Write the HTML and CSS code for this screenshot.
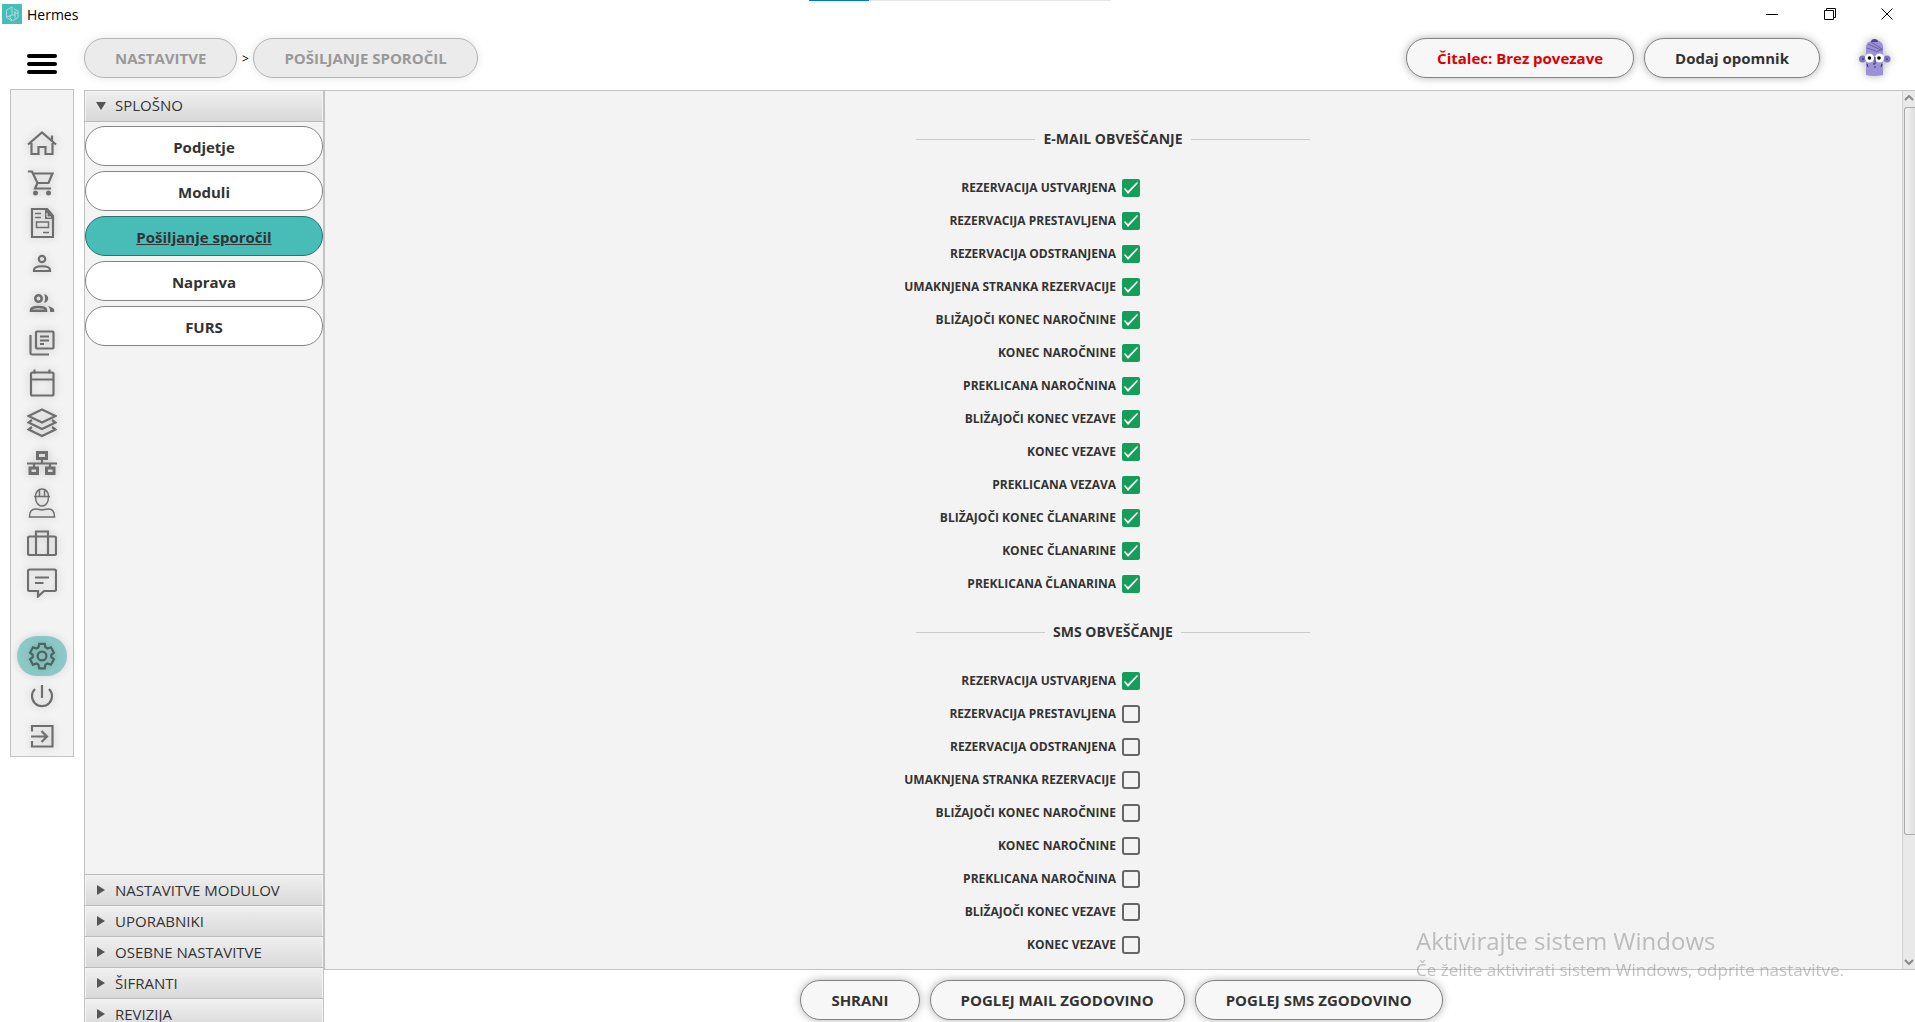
FILE: index.html
```
<!DOCTYPE html>
<html lang="sl">
<head>
    <meta charset="UTF-8">
    <meta name="viewport" content="width=device-width, initial-scale=1.0">
    <title>Hermes</title>
    <link rel="stylesheet" href="styles.css">
</head>
<body>
    <div class="loader"><span></span></div>
    <header class="titlebar">
        <svg class="logo" viewBox="0 0 20 20"><rect width="20" height="20" fill="#48bdb8"/><path d="M10 3 4.500 6v7.500L10 17l6-3.500V7l-4-2M10 3v8l-5 2M10 11h3V7M13 8v6M16 9h-2M8 11v3l2 2" fill="none" stroke="#a4dfdc"/></svg>
        <span class="app-name">Hermes</span>
        <div class="window-controls">
            <button aria-label="Minimiraj"><svg viewBox="0 0 12 12"><path d="M0 6.500h12"/></svg></button>
            <button aria-label="Obnovi"><svg viewBox="0 0 12 12"><path d="M.5 2.500h9v9h-9zM2.500 2.500v-2h9v9h-2"/></svg></button>
            <button aria-label="Zapri"><svg viewBox="0 0 12 12"><path d="M.5.5l11 11M11.500.5l-11 11"/></svg></button>
        </div>
    </header>
    <div class="app">
        <div class="left">
            <button class="burger" aria-label="Meni"><span></span><span></span><span></span></button>
            <nav class="rail">
                <a href="#"><svg viewBox="0 0 30 30"><path d="M1 16.500 15 4.500l14 12M25 13V7.500M4.500 15v11h7v-7h7v7h7V15"/></svg></a>
                <a href="#"><svg viewBox="0 0 30 30"><path d="M1 3.500h4l5.500 11.500h11L25.500 5.500H6M10.500 15 8 20.500h16"/><circle class="solid" cx="8.500" cy="25" r="2.500"/><circle class="solid" cx="21.500" cy="25" r="2.500"/></svg></a>
                <a href="#"><svg viewBox="0 0 30 30"><path d="M5 1h15l6 7v21H5z"/><path class="solid" d="M18 1h3l5 6v4h-8z"/><path d="M20 5v4h4" stroke="#f3f3f3" stroke-width="1"/><path d="M8 5.500h6M8 9.500h6M9.500 14h12v5.500h-12zM16 24.500h6" stroke-width="1.500"/></svg></a>
                <a href="#"><svg viewBox="0 0 30 30"><circle cx="15" cy="11" r="3.200"/><path d="M7 23v-1c0-5 16-5 16 0v1z"/></svg></a>
                <a href="#"><svg class="thick" viewBox="0 0 30 30"><circle cx="11.500" cy="10.500" r="3.200"/><path d="M4 22.700v-.7c0-4 15-4 15 0v.7z"/><path class="solid" d="M17 6.300a4.200 4.200 0 1 1 0 8.400c1.500-2.500 1.500-6 0-8.400zM20.500 18c4 .7 6.700 2.500 6.700 4v2H23v-2c0-1.500-1-3-2.500-4z"/></svg></a>
                <a href="#"><svg viewBox="0 0 30 30"><rect x="9" y="3.500" width="17.500" height="17" rx="1"/><path d="M3.500 7v18a1.500 1.500 0 0 0 1.500 1.500h17M13 8.500h9M13 12.500h9M13 16h4"/></svg></a>
                <a href="#"><svg viewBox="0 0 30 30"><rect x="4" y="4.500" width="22.500" height="23" rx="1.500"/><path d="M4 11.500h22M7.500 1.500v4M22.500 1.500v4"/></svg></a>
                <a href="#"><svg viewBox="0 0 30 30"><path d="M15 1.500 28.500 8 15 14.500 1.500 8zM5 12l-3.500 2.500L15 21l13.500-6.500L25 12M5 19l-3.500 2.500L15 28l13.500-6.500L25 19"/></svg></a>
                <a href="#"><svg viewBox="0 0 30 30"><path d="M0 15.500h30M15 11v4M7 15v4M23 15v4"/><path d="M10.500 4.500h9v6h-9zM3 20h7.500v5.500H3zM19.500 20H27v5.500h-7.500z" stroke-width="3"/></svg></a>
                <a href="#"><svg class="thin" viewBox="0 0 30 30"><path d="M8.500 8.500C8.500-1.500 21.500-1.500 21.500 8.500M7 8.500h16M12.500 8V2.500M17.500 8V2.500M8.500 9c0 12 13 12 13 0M2.500 29c0-5 1.500-8 6-8 4 0 4 1 6.500 1s2.500-1 6.500-1c4.500 0 6 3 6 8z"/></svg></a>
                <a href="#"><svg viewBox="0 0 30 30"><rect x="1" y="8.500" width="28" height="18.500" rx="1.500"/><path d="M9 27V3.500h12V27"/></svg></a>
                <a href="#"><svg viewBox="0 0 30 30"><path d="M2.500 1.500h25q1.500 0 1.500 1.500v18.500q0 1.500-1.500 1.500H17l-6 5.500V23H2.500Q1 23 1 21.500V3q0-1.500 1.500-1.500zM8 9.500h14M8 15h8.500"/></svg></a>
                <a href="#" class="active"><svg viewBox="0 0 24 24"><path d="M19.430 12.980c.04-.32.07-.64.07-.98 0-.34-.03-.66-.07-.98l2.110-1.650-2.440-4.350-2.660 1c-.52-.4-1.080-.73-1.690-.98L14.200 2.200h-4.400l-.67 2.870c-.61.250-1.170.590-1.690.980l-2.660-1-2.320 4.320 2.110 1.650c-.04.320-.07.650-.07.980 0 .330.030.660.070.980l-2.110 1.650 2.320 4.350 2.660-1c.52.400 1.080.730 1.690.980l.67 2.840h4.400l.55-2.840c.61-.25 1.170-.59 1.690-.98l2.660 1 2.440-4.350z"/><circle cx="12" cy="12" r="3.500"/></svg></a>
                <a href="#"><svg viewBox="0 0 30 30"><path d="M8 8a10 10 0 1 0 14 0M15 4v13"/></svg></a>
                <a href="#"><svg viewBox="0 0 30 30"><path d="M5 10.500V5h20.500v20.500H5V20M4 15.500h16M14.500 10l5.500 5.500-5.500 5.500"/></svg></a>
            </nav>
        </div>
        <div class="page">
            <div class="topbar">
                <button class="pill" disabled>NASTAVITVE</button>
                <span class="crumb">&gt;</span>
                <button class="pill" disabled>POŠILJANJE SPOROČIL</button>
                <button class="pill reader">Čitalec: Brez povezave</button>
                <button class="pill">Dodaj opomnik</button>
                <a href="#" class="avatar" aria-label="Profil">
                    <svg viewBox="0 0 32 38">
                        <path d="M7 7q1-5 8.500-5.500T24 7v29q-9 2-17 0z" fill="#9b91d6"/>
                        <path d="M12 3q0-3 3.500-3T19 3z" fill="#4c4285"/>
                        <path d="M9 5l13 6M12 3l11 7M8 9l9 3M17 13l7-3" stroke="#6a5fae" fill="none"/>
                        <circle cx="3.500" cy="20" r="3.500" fill="#8177c0"/><circle cx="28" cy="20" r="3.500" fill="#8177c0"/>
                        <path d="M3 20h2M27 20h2" stroke="#4c4285" stroke-width="1.500"/>
                        <circle cx="10.500" cy="19" r="4.500" fill="#fff"/><circle cx="20.500" cy="19" r="4.500" fill="#fff"/>
                        <circle cx="10.500" cy="19" r="1.800"/><circle cx="20" cy="19" r="1.800"/>
                        <path d="M16 18v7h-2M15 28h2M8 25l1 3M23 25l-1 3" stroke="#3b3368" fill="none"/>
                    </svg>
                </a>
            </div>
            <div class="workspace">
                <aside class="sidebar">
                    <button class="section open">SPLOŠNO</button>
                    <div class="section-items">
                        <button>Podjetje</button>
                        <button>Moduli</button>
                        <button class="selected">Pošiljanje sporočil</button>
                        <button>Naprava</button>
                        <button>FURS</button>
                    </div>
                    <button class="section">NASTAVITVE MODULOV</button>
                    <button class="section">UPORABNIKI</button>
                    <button class="section">OSEBNE NASTAVITVE</button>
                    <button class="section">ŠIFRANTI</button>
                    <button class="section">REVIZIJA</button>
                </aside>
                <main class="main">
                    <div class="panel">
                        <form class="content">
                            <h2>E-MAIL OBVEŠČANJE</h2>
                            <div class="options">
                                <label for="m1">REZERVACIJA USTVARJENA</label><input type="checkbox" id="m1" checked>
                                <label for="m2">REZERVACIJA PRESTAVLJENA</label><input type="checkbox" id="m2" checked>
                                <label for="m3">REZERVACIJA ODSTRANJENA</label><input type="checkbox" id="m3" checked>
                                <label for="m4">UMAKNJENA STRANKA REZERVACIJE</label><input type="checkbox" id="m4" checked>
                                <label for="m5">BLIŽAJOČI KONEC NAROČNINE</label><input type="checkbox" id="m5" checked>
                                <label for="m6">KONEC NAROČNINE</label><input type="checkbox" id="m6" checked>
                                <label for="m7">PREKLICANA NAROČNINA</label><input type="checkbox" id="m7" checked>
                                <label for="m8">BLIŽAJOČI KONEC VEZAVE</label><input type="checkbox" id="m8" checked>
                                <label for="m9">KONEC VEZAVE</label><input type="checkbox" id="m9" checked>
                                <label for="m10">PREKLICANA VEZAVA</label><input type="checkbox" id="m10" checked>
                                <label for="m11">BLIŽAJOČI KONEC ČLANARINE</label><input type="checkbox" id="m11" checked>
                                <label for="m12">KONEC ČLANARINE</label><input type="checkbox" id="m12" checked>
                                <label for="m13">PREKLICANA ČLANARINA</label><input type="checkbox" id="m13" checked>
                            </div>
                            <h2>SMS OBVEŠČANJE</h2>
                            <div class="options">
                                <label for="s1">REZERVACIJA USTVARJENA</label><input type="checkbox" id="s1" checked>
                                <label for="s2">REZERVACIJA PRESTAVLJENA</label><input type="checkbox" id="s2">
                                <label for="s3">REZERVACIJA ODSTRANJENA</label><input type="checkbox" id="s3">
                                <label for="s4">UMAKNJENA STRANKA REZERVACIJE</label><input type="checkbox" id="s4">
                                <label for="s5">BLIŽAJOČI KONEC NAROČNINE</label><input type="checkbox" id="s5">
                                <label for="s6">KONEC NAROČNINE</label><input type="checkbox" id="s6">
                                <label for="s7">PREKLICANA NAROČNINA</label><input type="checkbox" id="s7">
                                <label for="s8">BLIŽAJOČI KONEC VEZAVE</label><input type="checkbox" id="s8">
                                <label for="s9">KONEC VEZAVE</label><input type="checkbox" id="s9">
                            </div>
                        </form>
                        <div class="scrollbar">
                            <svg viewBox="0 0 10 6"><path d="M1 5l4-4 4 4"/></svg>
                            <div class="track"><div class="thumb"></div></div>
                            <svg viewBox="0 0 10 6"><path d="M1 1l4 4 4-4"/></svg>
                        </div>
                    </div>
                    <div class="actions">
                        <button class="pill">SHRANI</button>
                        <button class="pill">POGLEJ MAIL ZGODOVINO</button>
                        <button class="pill">POGLEJ SMS ZGODOVINO</button>
                    </div>
                </main>
            </div>
        </div>
    </div>
    <div class="watermark">
        <p class="watermark-title">Aktivirajte sistem Windows</p>
        <p>Če želite aktivirati sistem Windows, odprite nastavitve.</p>
    </div>
</body>
</html>
```
FILE: styles.css
```
* { box-sizing: border-box; }
body { margin: 0; height: 100vh; overflow: hidden; display: flex; flex-direction: column; font-family: "Open Sans", "Noto Sans", sans-serif; color: #333; background: #fff; }
button { font-family: inherit; padding: 0; border: none; background: none; cursor: pointer; color: inherit; }

/* window frame */
.loader { position: absolute; top: 0; left: 50%; width: 302px; height: 1px; margin-left: -149px; background: #e6e6e6; }
.loader span { display: block; width: 60px; height: 1px; background: #0078d7; }
.titlebar { display: flex; align-items: center; gap: 5px; height: 28px; padding-left: 2px; flex: none; }
.logo { width: 20px; height: 20px; }
.app-name { font-size: 14px; color: #000; }
.window-controls { display: flex; margin-left: auto; }
.window-controls button { width: 58px; height: 28px; }
.window-controls button:last-child { width: 56px; }
.window-controls svg { width: 12px; height: 12px; fill: none; stroke: #000; display: block; margin: 0 auto; }

.app { flex: 1; display: flex; min-height: 0; }
.left { width: 84px; flex: none; padding-left: 10px; }
.burger { display: flex; flex-direction: column; gap: 4px; width: 64px; padding: 26px 17px 15px; }
.burger span { height: 4px; width: 30px; border-radius: 2px; background: #000; }

/* icon rail */
.rail { width: 64px; padding: 33px 0 0; border: 1px solid #c3c3c3; background: #f3f3f3; display: flex; flex-direction: column; align-items: center; }
.rail a { width: 50px; height: 40px; border-radius: 20px; display: flex; align-items: center; justify-content: center; }
.rail svg { width: 30px; height: 30px; fill: none; stroke: #6e6e6e; stroke-width: 2.2; filter: drop-shadow(0 0 4px rgba(0, 0, 0, 0.2)); }
.rail .solid { fill: #6e6e6e; stroke: none; }
.rail .thin { stroke-width: 1.5; }
.rail .thick { stroke-width: 2.6; }
.rail .active { margin-top: 33px; background: #8dcac7; box-shadow: 0 0 8px rgba(0, 0, 0, 0.12); }
.rail .active svg { stroke: #4b6563; stroke-width: 1.8; }

.page { flex: 1; min-width: 0; display: flex; flex-direction: column; }
.topbar { display: flex; align-items: center; padding: 10px 24px 12px 0; }
.pill { height: 40px; padding: 0 30px; border: 1px solid #828282; border-radius: 20px; background: #f7f7f7; box-shadow: 0 0 8px rgba(0, 0, 0, 0.3); font-size: 15px; font-weight: 700; white-space: nowrap; }
.pill:disabled { color: #999; background: #ebebeb; border-color: #b5b5b5; box-shadow: 0 0 8px rgba(0, 0, 0, 0.1); cursor: default; }
.crumb { width: 16px; text-align: center; font-size: 12px; color: #000; }
.reader { margin: 0 10px 0 auto; color: #dc0000; }
.avatar { display: block; width: 32px; height: 38px; margin-left: 39px; filter: drop-shadow(0 0 4px rgba(0, 0, 0, 0.3)); }
.avatar svg { display: block; width: 32px; height: 38px; }

.workspace { flex: 1; display: flex; min-height: 0; }

/* accordion, the last header runs under the window edge */
.sidebar { width: 240px; flex: none; display: flex; flex-direction: column; margin-bottom: -8px; border: 1px solid #c3c3c3; border-bottom: none; background: #f3f3f3; overflow: hidden; }
.section { height: 31px; flex: none; display: flex; align-items: center; padding-bottom: 2px; border: 1px solid #f3f3f3; border-bottom: none; box-shadow: 0 -1px 0 #bababa; background: linear-gradient(#efefef, #d8d8d8); font-size: 15px; text-align: left; color: #333; }
.section::before { content: ""; border-style: solid; border-width: 5px 0 5px 8px; border-color: transparent transparent transparent #555; margin: 0 10px 0 11px; }
.section.open { height: 30px; padding-bottom: 4px; box-shadow: 0 1px 0 #bababa; }
.section.open::before { border-width: 8px 5px 0; border-color: #555 transparent transparent; margin: 2px 9px 0 10px; }
.section-items { flex: 1; display: flex; flex-direction: column; gap: 5px; padding-top: 5px; }
.section-items button { height: 40px; padding-top: 2px; border: 1px solid #858585; border-radius: 20px; background: #fff; font-size: 15px; font-weight: 700; }
.section-items .selected { background: #48bdb8; border-color: #2b7370; text-decoration: underline; }

.main { flex: 1; min-width: 0; display: flex; flex-direction: column; }
.panel { flex: 1; min-height: 0; display: flex; overflow: hidden; border: 1px solid #c3c3c3; border-right: none; background: #f3f3f3; }
.content { flex: 1; padding-top: 38px; padding-right: 1px; }
.content h2 { width: 394px; margin: 0 auto 30px; display: flex; align-items: center; gap: 8px; font-size: 14px; line-height: 20px; font-weight: 700; }
.content h2::before, .content h2::after { content: ""; flex: 1; height: 1px; background: #cbcbcb; }
.options { display: grid; grid-template-columns: 1fr 1fr; column-gap: 6px; padding-left: 12px; row-gap: 15px; align-items: center; margin-bottom: 29px; }
.options label { justify-self: end; font-size: 12px; line-height: 18px; font-weight: 700; }
.options input { appearance: none; width: 18px; height: 18px; margin: 0; border: 2px solid #666; border-radius: 3px; }
.options input:checked { border: none; border-radius: 2px; background: #149e5a; }
.options input:checked::before { content: ""; display: block; width: 18px; height: 18px; background: #fff; clip-path: polygon(2px 10px, 3px 9px, 6px 12px, 15px 3px, 16px 4px, 6px 15px); }

.scrollbar { width: 13px; flex: none; display: flex; flex-direction: column; align-items: center; gap: 6px; padding: 4px 0; border-left: 1px solid #d2d2d2; background: #e9e9e9; overflow: hidden; }
.scrollbar svg { width: 10px; height: 6px; fill: none; stroke: #888; stroke-width: 2; flex: none; }
.track { flex: 1; align-self: stretch; padding-left: 1px; }
.thumb { height: 86%; border: 1px solid #aaa; border-right: none; border-radius: 3px 0 0 3px; background: linear-gradient(90deg, #f3f3f3, #dedede); }

.actions { display: flex; justify-content: center; gap: 10px; padding: 10px 0 2px 4px; }

.watermark { position: fixed; right: 71px; bottom: 40px; color: #8f8f8f; opacity: 0.55; pointer-events: none; }
.watermark p { margin: 0; font-size: 17px; line-height: 24px; }
.watermark .watermark-title { font-size: 24px; line-height: 34px; }
```
